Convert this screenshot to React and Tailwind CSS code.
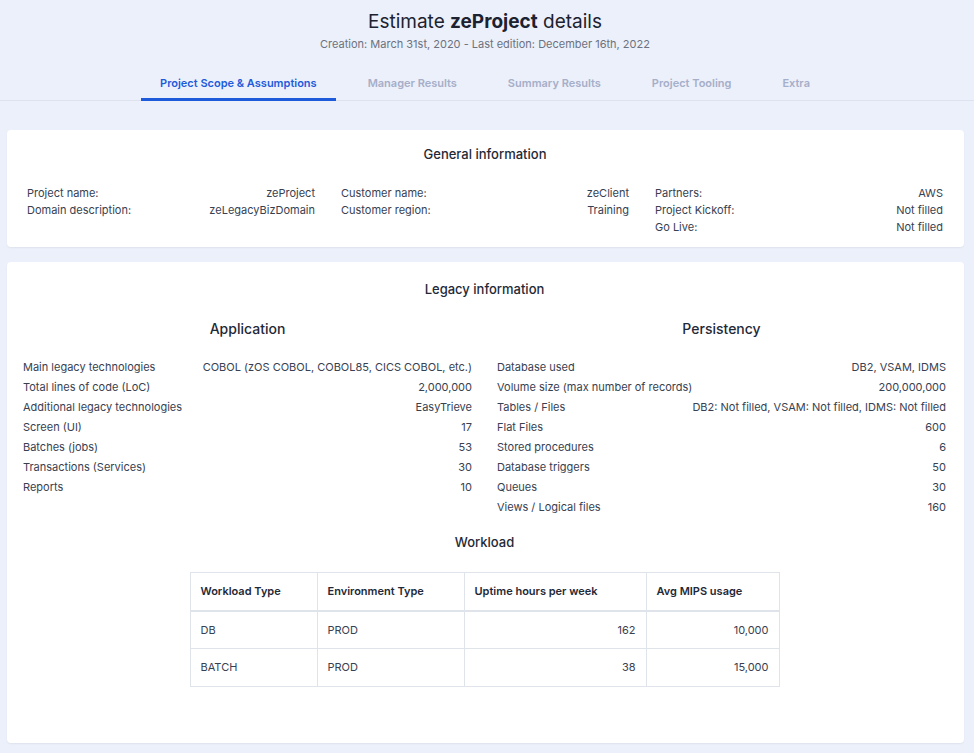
import React from "react";

const tabs = ["Project Scope & Assumptions", "Manager Results", "Summary Results", "Project Tooling", "Extra"];

const general = [
  [["Project name:", "zeProject"], ["Domain description:", "zeLegacyBizDomain"]],
  [["Customer name:", "zeClient"], ["Customer region:", "Training"]],
  [["Partners:", "AWS"], ["Project Kickoff:", "Not filled"], ["Go Live:", "Not filled"]],
];

const app = [
  ["Main legacy technologies", "COBOL (zOS COBOL, COBOL85, CICS COBOL, etc.)"],
  ["Total lines of code (LoC)", "2,000,000"],
  ["Additional legacy technologies", "EasyTrieve"],
  ["Screen (UI)", "17"],
  ["Batches (jobs)", "53"],
  ["Transactions (Services)", "30"],
  ["Reports", "10"],
];

const pers = [
  ["Database used", "DB2, VSAM, IDMS"],
  ["Volume size (max number of records)", "200,000,000"],
  ["Tables / Files", "DB2: Not filled, VSAM: Not filled, IDMS: Not filled"],
  ["Flat Files", "600"],
  ["Stored procedures", "6"],
  ["Database triggers", "50"],
  ["Queues", "30"],
  ["Views / Logical files", "160"],
];

const workload = [
  ["DB", "PROD", "162", "10,000"],
  ["BATCH", "PROD", "38", "15,000"],
];

function KV({ rows }) {
  return (
    <div className="flex flex-col">
      {rows.map(([k, v]) => (
        <div key={k} className="flex justify-between h-[20px] items-center text-[11px] text-[#374151]">
          <span>{k}</span>
          <span>{v}</span>
        </div>
      ))}
    </div>
  );
}

export default function App() {
  return (
    <div className="min-h-screen bg-[#ecf0fa] font-['Inter',sans-serif] text-[#374151]">
      <div className="pt-[10px] pr-[4px] text-center">
        <h1 className="text-[19px] leading-[24px] text-[#1c2230]">
          Estimate <span className="font-bold">zeProject</span> details
        </h1>
        <p className="mt-[2px] text-[11px] leading-[16px] text-[#6b7280]">
          Creation: March 31st, 2020 - Last edition: December 16th, 2022
        </p>
      </div>
      <div className="mt-[23px] flex justify-center gap-[13px] pr-[4px] border-b border-[#dde2ee]">
        {tabs.map((t, i) => (
          <div
            key={t}
            className={
              i === 0
                ? "px-[19px] pb-[7px] mb-[-1px] text-[11px] leading-[16px] font-semibold text-[#1d5bdb] border-b-[3px] border-[#1d5bdb]"
                : "px-[19px] pb-[7px] mb-[-1px] text-[11px] leading-[16px] font-semibold text-[#a6aec9] border-b-[3px] border-transparent"
            }
          >
            {t}
          </div>
        ))}
      </div>

      <div className="pl-[7px] pr-[10px] pt-[29px] pb-[10px] flex flex-col gap-[15px]">
        <div className="bg-white rounded-[4px] shadow-[0_1px_2px_rgba(0,0,0,0.06)] pl-[20px] pr-[21px] pt-[14px] pb-[11px]">
          <h2 className="text-center text-[13px] leading-[20px] font-medium text-[#1f2937]">General information</h2>
          <div className="mt-[21px] grid grid-cols-3 gap-x-[26px]">
            {general.map((col, i) => (
              <div key={i} className="flex flex-col">
                {col.map(([k, v]) => (
                  <div key={k} className="flex justify-between h-[17px] items-center text-[11px] text-[#374151]">
                    <span>{k}</span>
                    <span>{v}</span>
                  </div>
                ))}
              </div>
            ))}
          </div>
        </div>

        <div className="bg-white rounded-[4px] shadow-[0_1px_2px_rgba(0,0,0,0.06)] pl-[16px] pr-[18px] pt-[17px] pb-[56px]">
          <h2 className="text-center text-[13px] leading-[20px] font-medium text-[#1f2937]">Legacy information</h2>
          <div className="mt-[20px] grid grid-cols-2 gap-x-[25px] items-start">
            <div>
              <h3 className="text-center text-[14px] leading-[20px] font-medium text-[#1f2937]">Application</h3>
              <div className="mt-[18px]">
                <KV rows={app} />
              </div>
            </div>
            <div>
              <h3 className="text-center text-[14px] leading-[20px] font-medium text-[#1f2937]">Persistency</h3>
              <div className="mt-[18px]">
                <KV rows={pers} />
              </div>
            </div>
          </div>
          <h3 className="mt-[15px] text-center text-[13px] leading-[20px] font-medium text-[#1f2937]">Workload</h3>
          <div className="mt-[20px] flex justify-center">
            <table className="border-collapse text-[11px] text-[#374151]">
              <thead>
                <tr className="h-[38px] border-b-2 border-[#dfe3ea]">
                  <th className="w-[127px] border border-[#dfe3ea] text-left px-[10px] font-semibold text-[#1f2937]">Workload Type</th>
                  <th className="w-[147px] border border-[#dfe3ea] text-left px-[10px] font-semibold text-[#1f2937]">Environment Type</th>
                  <th className="w-[182px] border border-[#dfe3ea] text-left px-[10px] font-semibold text-[#1f2937]">Uptime hours per week</th>
                  <th className="w-[133px] border border-[#dfe3ea] text-left px-[10px] font-semibold text-[#1f2937]">Avg MIPS usage</th>
                </tr>
              </thead>
              <tbody>
                {workload.map((r) => (
                  <tr key={r[0]} className="h-[38px]">
                    <td className="border border-[#dfe3ea] px-[10px]">{r[0]}</td>
                    <td className="border border-[#dfe3ea] px-[10px]">{r[1]}</td>
                    <td className="border border-[#dfe3ea] px-[10px] text-right">{r[2]}</td>
                    <td className="border border-[#dfe3ea] px-[10px] text-right">{r[3]}</td>
                  </tr>
                ))}
              </tbody>
            </table>
          </div>
        </div>
      </div>
    </div>
  );
}
